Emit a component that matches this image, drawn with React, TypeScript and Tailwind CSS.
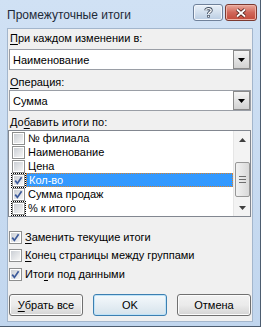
import {ReactNode} from "react"

const U = ({children}: {children: ReactNode}) => <span className="underline underline-offset-[2px]">{children}</span>

const Check = ({checked, focus}: {checked?: boolean; focus?: boolean}) => (
  <span className={`flex h-[15px] w-[15px] shrink-0 items-center justify-center ${focus ? "border border-dotted border-black" : "border border-transparent"}`}>
    <span className="relative flex h-[13px] w-[13px] items-center justify-center border border-[#8e8f8f] bg-white">
      <span className="h-[9px] w-[9px] bg-gradient-to-br from-[#cbcfd5] to-[#f6f6f6]" />
      {checked && (
        <svg className="absolute left-0 top-0" width="11" height="11" viewBox="0 0 11 11">
          <path d="M2.2 5.6 L4.4 8.4 L8.6 2.2" fill="none" stroke="#3c5a9a" strokeWidth="1.7" />
        </svg>
      )}
    </span>
  </span>
)

const Arrow = ({up}: {up?: boolean}) => (
  <svg width="7" height="4" viewBox="0 0 7 4">
    <path d={up ? "M0 4 L3.5 0 L7 4 Z" : "M0 0 L7 0 L3.5 4 Z"} fill="#3f3f3f" />
  </svg>
)

const Combo = ({value}: {value: string}) => (
  <div className="flex h-[21px] w-[242px] items-stretch border border-[#9a9ea6] bg-white">
    <div className="flex flex-1 items-center pl-[3px]">{value}</div>
    <div className="flex w-[17px] items-center justify-center border border-[#8a8a8a] bg-gradient-to-b from-[#f4f4f4] to-[#d2d2d2]">
      <svg width="7" height="4" viewBox="0 0 7 4">
        <path d="M0 0 L7 0 L3.5 4 Z" fill="#000" />
      </svg>
    </div>
  </div>
)

const Button = ({children, primary}: {children: ReactNode; primary?: boolean}) => (
  <div
    className={`flex h-[22px] w-[74px] items-center justify-center rounded-[3px] border ${
      primary
        ? "border-[#3c7fb1] bg-gradient-to-b from-[#f4f9fc] via-[#e6eef4] to-[#d5e3ec] shadow-[inset_0_0_0_1px_#bfe3f8]"
        : "border-[#707070] bg-gradient-to-b from-[#f2f2f2] via-[#ebebeb] to-[#d4d4d4] shadow-[inset_0_0_0_1px_#fcfcfc]"
    }`}
  >
    {children}
  </div>
)

const fields = [
  {label: "№ филиала", checked: false},
  {label: "Наименование", checked: false},
  {label: "Цена", checked: false},
  {label: "Кол-во", checked: true, selected: true},
  {label: "Сумма продаж", checked: true},
  {label: "% к итого", checked: false, focus: true},
]

const options = [
  {label: <><U>З</U>аменить текущие итоги</>, checked: true, mt: "mt-[13px]"},
  {label: <><U>К</U>онец страницы между группами</>, checked: false, mt: "mt-[4px]"},
  {label: <>Ито<U>г</U>и под данными</>, checked: true, mt: "mt-[5px]"},
]

export default function App() {
  return (
    <div className="flex h-[327px] w-[261px] flex-col border-b border-r border-[#4d5d70] bg-gradient-to-b from-[#d0e1f4] to-[#c1d6ee] font-['Liberation_Sans',sans-serif] text-[11px] leading-[14px] text-black">
      <div className="flex h-[28px] shrink-0 items-start pl-[7px] pr-[3px]">
        <div className="mt-[8px] text-[12px] leading-[14px] text-[#1e2a38]">Промежуточные итоги</div>
        <div className="ml-auto mt-[4px] flex gap-[2px]">
          <div className="flex h-[17px] w-[30px] items-center justify-center rounded-[3px] border border-[#6f819a] bg-gradient-to-b from-[#e9f0f8] via-[#d3e0ee] to-[#b9cce2] shadow-[inset_0_0_0_1px_#f2f6fb]">
            <svg width="9" height="11" viewBox="0 0 9 11">
              <path d="M1.8 3.2 C1.8 1 7.2 1 7.2 3.4 C7.2 5.2 4.5 5 4.5 7" fill="none" stroke="#3d4a5c" strokeWidth="3" />
              <path d="M1.8 3.2 C1.8 1 7.2 1 7.2 3.4 C7.2 5.2 4.5 5 4.5 7" fill="none" stroke="#fff" strokeWidth="1.3" />
              <rect x="3.2" y="8" width="2.6" height="2.6" fill="#3d4a5c" />
              <rect x="3.9" y="8.7" width="1.2" height="1.2" fill="#fff" />
            </svg>
          </div>
          <div className="flex h-[17px] w-[32px] items-center justify-center rounded-[3px] border border-[#7b3a31] bg-gradient-to-b from-[#e9a99c] via-[#d0675a] to-[#c24a3a] shadow-[inset_0_0_0_1px_#eeb2a6]">
            <svg width="12" height="10" viewBox="0 0 12 10">
              <path d="M2 1.5 L10 8.5 M10 1.5 L2 8.5" stroke="#4b1d18" strokeWidth="3.6" />
              <path d="M2 1.5 L10 8.5 M10 1.5 L2 8.5" stroke="#fff" strokeWidth="1.8" />
            </svg>
          </div>
        </div>
      </div>

      <div className="mb-[4px] ml-[7px] mr-[7px] flex flex-1 flex-col border border-[#a3b6cc] bg-[#f0f0f0] px-[1px]">
        <div className="mt-[2px] pl-[1px]">
          <U>П</U>ри каждом изменении в:
        </div>
        <div className="mt-[4px]">
          <Combo value="Наименование" />
        </div>
        <div className="mt-[5px] pl-[1px]">
          <U>О</U>перация:
        </div>
        <div className="mt-[1px]">
          <Combo value="Сумма" />
        </div>
        <div className="mt-[4px] pl-[1px]">
          До<U>б</U>авить итоги по:
        </div>

        <div className="mt-[1px] flex h-[87px] w-[243px] -ml-[1px] border border-[#828790] bg-white">
          <div className="flex flex-1 flex-col">
            {fields.map(f => (
              <div key={f.label} className="flex h-[14px] items-center pl-[2px]">
                <Check checked={f.checked} focus={f.selected || f.focus} />
                <div
                  className={`flex h-[14px] flex-1 items-center pl-[2px] ${
                    f.selected ? "border border-dotted border-[#d9822b] bg-[#3399ff] text-white" : ""
                  }`}
                >
                  {f.label}
                </div>
              </div>
            ))}
          </div>
          <div className="flex w-[17px] flex-col items-center border-l border-[#e6e6e6] bg-[#f3f3f3]">
            <div className="flex h-[17px] items-center justify-center">
              <Arrow up />
            </div>
            <div className="mt-[14px] flex h-[35px] w-[15px] flex-col items-center justify-center gap-[2px] rounded-[2px] border border-[#979797] bg-gradient-to-r from-[#f2f2f2] to-[#d9d9d9]">
              <span className="h-px w-[7px] bg-[#6e6e6e]" />
              <span className="h-px w-[7px] bg-[#6e6e6e]" />
              <span className="h-px w-[7px] bg-[#6e6e6e]" />
            </div>
            <div className="mt-auto flex h-[17px] items-center justify-center">
              <Arrow />
            </div>
          </div>
        </div>

        {options.map((o, i) => (
          <div key={i} className={`${o.mt} flex h-[14px] items-center`}>
            <span className="-ml-[1px]">
              <Check checked={o.checked} />
            </span>
            <span className="ml-[2px]">{o.label}</span>
          </div>
        ))}

        <div className="mt-[13px] flex justify-between">
          <Button>
            <U>У</U>брать все
          </Button>
          <Button primary>OK</Button>
          <Button>Отмена</Button>
        </div>
      </div>
    </div>
  )
}
